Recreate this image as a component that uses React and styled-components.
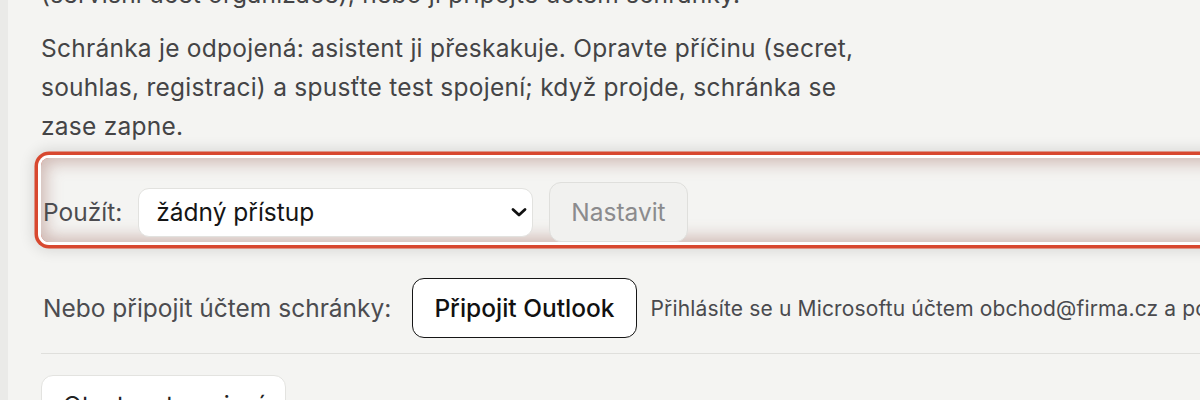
import React from "react";
import styled, { createGlobalStyle } from "styled-components";

const Global = createGlobalStyle`
  html, body {
    margin: 0;
    padding: 0;
    background: #eaeae8;
    overflow: hidden;
  }
  body {
    font-family: Inter, "Noto Sans", sans-serif;
    color: #444446;
  }
  * { box-sizing: border-box; }
`;

const Page = styled.div`
  padding-left: 8px;
  width: 1500px;
`;

const Card = styled.section`
  background: #f4f4f2;
  padding: 0 0 60px 33px;
  font-size: 24.5px;
  line-height: 39px;
`;

const Para = styled.p`
  margin: ${(p) => p.$top}px 0 0 0;
  max-width: 830px;
  letter-spacing: 0.25px;
`;

const SetupRow = styled.div`
  margin-top: 12px;
  padding: 24px 0 0 0;
  display: flex;
  align-items: center;
  gap: 16px;
  border-radius: 8px;
  box-shadow:
    inset 0 0 16px 5px rgba(145, 80, 70, 0.36),
    0 0 0 3px #ffffff,
    0 0 0 6.5px #d8482f,
    0 0 14px 9px rgba(0, 0, 0, 0.11);
`;

const Label = styled.span`
  color: #4c4c50;
  padding-left: 2px;
`;

const SelectWrap = styled.div`
  position: relative;
  width: 395px;
`;

const Select = styled.select`
  appearance: none;
  -webkit-appearance: none;
  width: 100%;
  height: 49px;
  border: 1px solid #e2e2df;
  border-radius: 11px;
  background: #ffffff;
  font: inherit;
  font-size: 24.5px;
  color: #151515;
  padding: 0 40px 0 17px;
  outline: none;
`;

const Chevron = styled.svg`
  position: absolute;
  right: 5px;
  top: 50%;
  transform: translateY(-50%);
  pointer-events: none;
`;

const Button = styled.button`
  font: inherit;
  font-size: 24.5px;
  line-height: 28px;
  height: 60px;
  padding: 0 21px;
  border-radius: 12px;
  cursor: pointer;
  background: ${(p) => (p.$variant === "disabled" ? "#f1f1ef" : "#ffffff")};
  color: ${(p) =>
    p.$variant === "disabled" ? "#8b8b8d" : p.$variant === "strong" ? "#111" : "#222"};
  font-weight: ${(p) => (p.$variant === "strong" ? 500 : 400)};
  border: ${(p) =>
    p.$variant === "strong"
      ? "1.5px solid #161616"
      : p.$variant === "disabled"
      ? "1px solid #dfdfdc"
      : "1px solid #e3e3e0"};
`;

const ConnectRow = styled.div`
  margin-top: 36px;
  display: flex;
  align-items: center;
  white-space: nowrap;
`;

const ConnectLabel = styled.span`
  color: #4c4c50;
  padding-left: 2px;
  margin-right: 21px;
`;

const Hint = styled.span`
  margin-left: 14px;
  font-size: 21px;
  letter-spacing: 0.15px;
  color: #4a4a4e;
`;

const Divider = styled.hr`
  margin: 15px 0 0 0;
  border: 0;
  border-top: 1px solid #dfdfdc;
`;

const TestRow = styled.div`
  margin-top: 21px;
`;

export default function App() {
  return (
    <>
      <Global />
      <Page>
        <Card>
          <Para $top={-25}>
            (servisní účet organizace), nebo ji připojte účtem schránky.
          </Para>
          <Para $top={15}>
            Schránka je odpojená: asistent ji přeskakuje. Opravte příčinu
            (secret, souhlas, registraci) a spusťte test spojení; když projde,
            schránka se zase zapne.
          </Para>
          <SetupRow>
            <Label>Použít:</Label>
            <SelectWrap>
              <Select defaultValue="none">
                <option value="none">žádný přístup</option>
                <option value="sp">servisní účet organizace</option>
              </Select>
              <Chevron width="18" height="12" viewBox="0 0 18 12">
                <path
                  d="M3 3.5 L9 9 L15 3.5"
                  fill="none"
                  stroke="#111"
                  strokeWidth="2.8"
                  strokeLinecap="round"
                  strokeLinejoin="round"
                />
              </Chevron>
            </SelectWrap>
            <Button $variant="disabled" disabled>
              Nastavit
            </Button>
          </SetupRow>
          <ConnectRow>
            <ConnectLabel>Nebo připojit účtem schránky:</ConnectLabel>
            <Button $variant="strong">Připojit Outlook</Button>
            <Hint>
              Přihlásíte se u Microsoftu účtem obchod@firma.cz a povolíte
              přístup ke schránce.
            </Hint>
          </ConnectRow>
          <Divider />
          <TestRow>
            <Button>Otestovat spojení</Button>
          </TestRow>
        </Card>
      </Page>
    </>
  );
}
